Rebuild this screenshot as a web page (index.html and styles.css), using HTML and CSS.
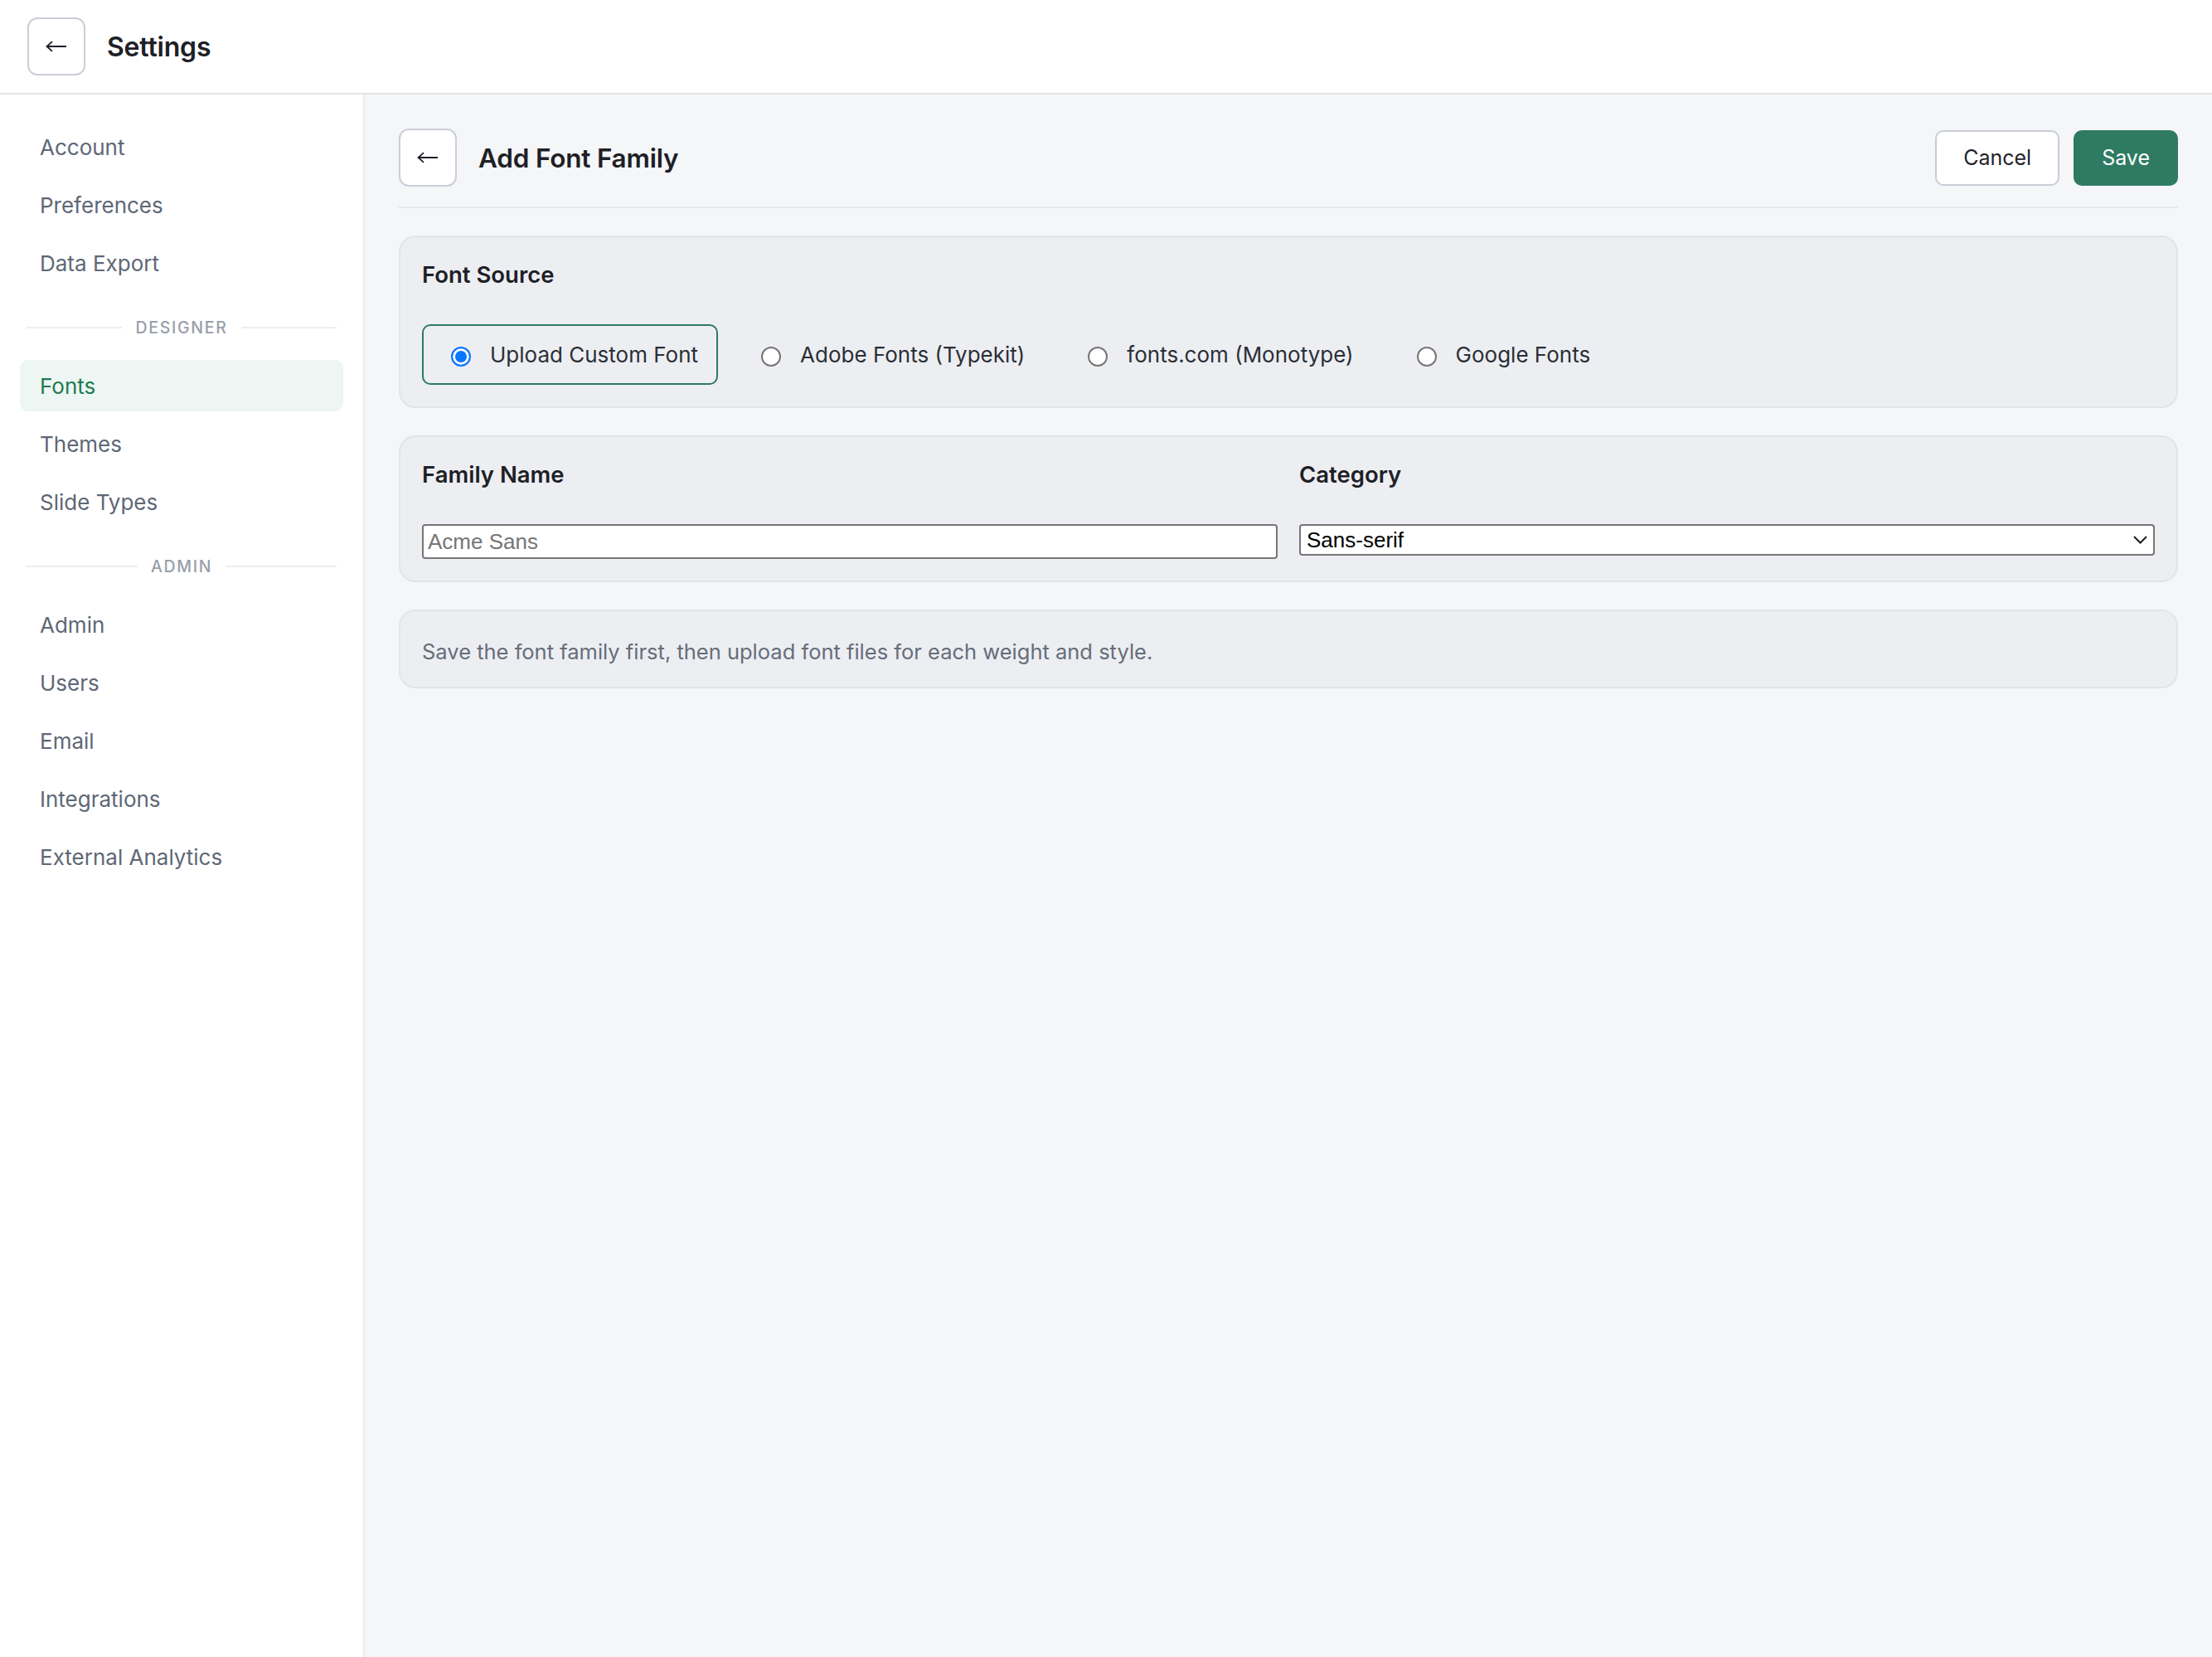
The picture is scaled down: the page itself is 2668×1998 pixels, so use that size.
FILE: index.html
```html
<!DOCTYPE html>
<html lang="en">
<head>
    <meta charset="UTF-8">
    <meta name="viewport" content="width=device-width, initial-scale=1.0">
    <title>Settings - Add Font Family</title>
    <link rel="stylesheet" href="styles.css">
</head>
<body>
    <header class="topbar">
        <button class="icon-btn" type="button" aria-label="Back">
            <svg width="26" height="14" viewBox="0 0 26 14" fill="none">
                <path d="M1.5 7H25M8 1.2L1.5 7L8 12.8" stroke="#1d2026" stroke-width="1.8"/>
            </svg>
        </button>
        <h1 class="topbar-title">Settings</h1>
    </header>

    <div class="layout">
        <nav class="sidebar">
            <a class="nav-item" href="#">Account</a>
            <a class="nav-item" href="#">Preferences</a>
            <a class="nav-item" href="#">Data Export</a>

            <div class="nav-section"><span>Designer</span></div>
            <a class="nav-item active" href="#">Fonts</a>
            <a class="nav-item" href="#">Themes</a>
            <a class="nav-item" href="#">Slide Types</a>

            <div class="nav-section"><span>Admin</span></div>
            <a class="nav-item" href="#">Admin</a>
            <a class="nav-item" href="#">Users</a>
            <a class="nav-item" href="#">Email</a>
            <a class="nav-item" href="#">Integrations</a>
            <a class="nav-item" href="#">External Analytics</a>
        </nav>

        <main class="content">
            <div class="page-head">
                <button class="icon-btn" type="button" aria-label="Back">
                    <svg width="26" height="14" viewBox="0 0 26 14" fill="none">
                        <path d="M1.5 7H25M8 1.2L1.5 7L8 12.8" stroke="#1d2026" stroke-width="1.8"/>
                    </svg>
                </button>
                <h2 class="page-title">Add Font Family</h2>
                <div class="actions">
                    <button class="btn btn-secondary" type="button">Cancel</button>
                    <button class="btn btn-primary" type="button">Save</button>
                </div>
            </div>

            <section class="card">
                <h3 class="card-title">Font Source</h3>
                <div class="source-options">
                    <label class="source-option selected">
                        <input type="radio" name="source" value="upload" checked>
                        <span>Upload Custom Font</span>
                    </label>
                    <label class="source-option">
                        <input type="radio" name="source" value="adobe">
                        <span>Adobe Fonts (Typekit)</span>
                    </label>
                    <label class="source-option">
                        <input type="radio" name="source" value="monotype">
                        <span>fonts.com (Monotype)</span>
                    </label>
                    <label class="source-option">
                        <input type="radio" name="source" value="google">
                        <span>Google Fonts</span>
                    </label>
                </div>
            </section>

            <section class="card">
                <div class="field-grid">
                    <div class="field">
                        <label class="card-title" for="familyName">Family Name</label>
                        <input class="text-input" type="text" id="familyName" placeholder="Acme Sans">
                    </div>
                    <div class="field">
                        <label class="card-title" for="category">Category</label>
                        <div class="select-wrap">
                            <select class="select-input" id="category">
                                <option>Sans-serif</option>
                                <option>Serif</option>
                                <option>Monospace</option>
                                <option>Display</option>
                                <option>Handwriting</option>
                            </select>
                            <svg class="select-caret" width="17" height="10" viewBox="0 0 17 10" fill="none">
                                <path d="M1 1l7.5 7.5L16 1" stroke="#1d1d1f" stroke-width="2"/>
                            </svg>
                        </div>
                    </div>
                </div>
            </section>

            <section class="card card-note">
                <p class="hint">Save the font family first, then upload font files for each weight and style.</p>
            </section>
        </main>
    </div>
</body>
</html>
```

FILE: styles.css
```css
body {
    margin: 0;
    font-family: 'Inter', 'Noto Sans', sans-serif;
    background: #f5f6f8;
    color: #1d2026;
}

h1, h2, h3, p {
    margin: 0;
}

/* top bar */

.topbar {
    height: 112px;
    display: flex;
    align-items: center;
    gap: 26px;
    padding: 0 33px;
    background: #fff;
    border-bottom: 2px solid #e1e3e8;
}

.topbar-title {
    font-size: 32px;
    font-weight: 600;
    letter-spacing: -0.2px;
}

.icon-btn {
    width: 70px;
    height: 70px;
    display: flex;
    align-items: center;
    justify-content: center;
    border: 2px solid #cbced9;
    border-radius: 12px;
    background: #fff;
    padding: 0;
    cursor: pointer;
}

/* page layout */

.layout {
    display: flex;
    min-height: calc(100vh - 114px);
}

.sidebar {
    width: 440px;
    box-sizing: border-box;
    flex-shrink: 0;
    padding: 32px 24px;
    background: #fff;
    border-right: 2px solid #e9ebef;
    display: flex;
    flex-direction: column;
    gap: 8px;
}

.nav-item {
    height: 62px;
    display: flex;
    align-items: center;
    padding: 0 24px;
    border-radius: 10px;
    font-size: 26px;
    color: #5e6776;
    text-decoration: none;
}

.nav-item.active {
    background: #edf6f2;
    color: #1f7a53;
}

.nav-section {
    height: 70px;
    box-sizing: border-box;
    padding-top: 8px;
    margin: 0 8px;
    display: flex;
    align-items: center;
    gap: 16px;
    font-size: 19.5px;
    font-weight: 500;
    letter-spacing: 1.7px;
    text-transform: uppercase;
    color: #989eaa;
}

.nav-section::before,
.nav-section::after {
    content: "";
    flex: 1;
    height: 2px;
    background: #eceef2;
}

/* main column */

.content {
    flex: 1;
    padding: 41px 41px;
    display: flex;
    flex-direction: column;
    gap: 33px;
}

.page-head {
    display: flex;
    align-items: center;
    padding-bottom: 24px;
    border-bottom: 2px solid #e5e7eb;
}

.page-title {
    margin-left: 26px;
    font-size: 31.5px;
    font-weight: 600;
    letter-spacing: -0.2px;
}

.actions {
    margin-left: auto;
    display: flex;
    gap: 17px;
}

.btn {
    height: 67px;
    padding: 0 32px;
    border-radius: 10px;
    font-family: inherit;
    font-size: 25px;
    cursor: pointer;
}

.btn-secondary {
    background: #fff;
    border: 2px solid #c9ccd6;
    color: #1f2329;
}

.btn-primary {
    background: #2e7b62;
    border: 2px solid #2e7b62;
    color: #fff;
}

/* cards */

.card {
    background: #edeef2;
    border: 2px solid #e2e4e9;
    border-radius: 20px;
    padding: 26px;
}

.card-note {
    padding: 29px 26px 23px;
}

.card-title {
    display: block;
    font-size: 27.5px;
    line-height: 34px;
    font-weight: 600;
    color: #1d2026;
    margin: 2px 0 43px;
}

.source-options {
    display: flex;
    gap: 17px;
}

.source-option {
    height: 73px;
    box-sizing: border-box;
    display: flex;
    align-items: center;
    gap: 23px;
    padding: 0 22px 0 33px;
    border: 2px solid transparent;
    border-radius: 10px;
    font-size: 26px;
    color: #2a2f36;
    cursor: pointer;
}

.source-option.selected {
    border-color: #2e7a5e;
}

/* radio drawn as a round dot */
.source-option input {
    appearance: none;
    width: 24px;
    height: 24px;
    margin: 4px 0 0;
    border: 2px solid #767676;
    border-radius: 50%;
    background: #fff;
    flex-shrink: 0;
}

.source-option input:checked {
    border-color: #0a75ff;
    background: #0a75ff;
    box-shadow: inset 0 0 0 3px #fff;
}

.field-grid {
    display: grid;
    grid-template-columns: 1fr 1fr;
    gap: 26px;
    align-items: start;
}

.text-input,
.select-input {
    width: 100%;
    box-sizing: border-box;
    border: 2px solid #767676;
    border-radius: 4px;
    background: #fff;
    font-family: 'Liberation Sans', Arial, sans-serif;
    font-size: 26px;
    color: #000;
}

.text-input {
    height: 42px;
    padding: 0 5px;
}

.text-input::placeholder {
    color: #757575;
}

.select-wrap {
    position: relative;
}

.select-input {
    height: 38px;
    padding: 0 40px 0 7px;
    appearance: none;
}

.select-caret {
    position: absolute;
    right: 9px;
    top: 14px;
    pointer-events: none;
}

.hint {
    font-size: 25.5px;
    line-height: 39px;
    color: #666d7a;
}
```
